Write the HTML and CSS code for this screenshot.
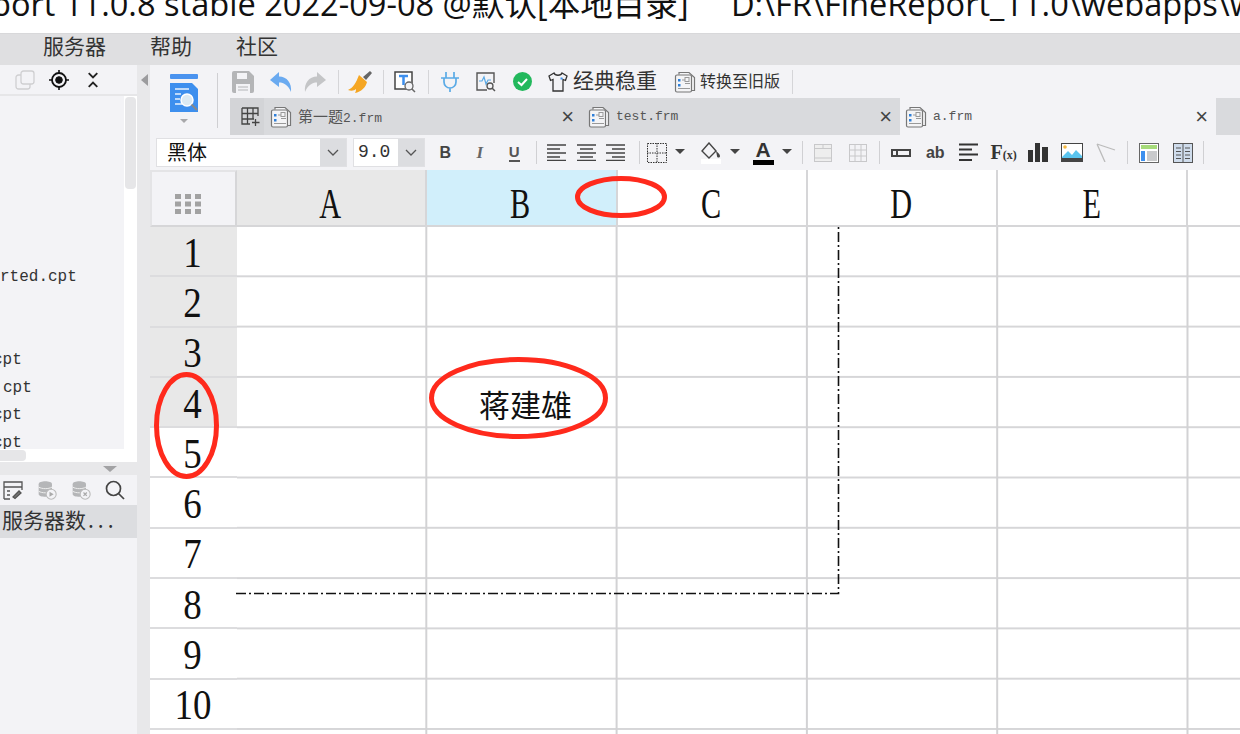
FILE: index.html
```html
<!DOCTYPE html>
<html lang="zh-CN">
<head>
    <meta charset="UTF-8">
    <title>FineReport 11.0.8</title>
    <link rel="stylesheet" href="styles.css">
</head>
<body>

<svg width="0" height="0" class="defs">
    <symbol id="frm" viewBox="0 0 22 22">
        <path d="M5 3.5V1.5H15L20.5 6.5V19.500H17" fill="#f4f4f6" stroke="#777" stroke-width="1.200"/>
        <rect x="1.500" y="4" width="16" height="17" rx="1.500" fill="#f4f4f6" stroke="#777" stroke-width="1.200"/>
        <rect x="4" y="8" width="2.500" height="2.500" fill="#2f7fd8"/>
        <rect x="4" y="13" width="2.500" height="2.500" fill="#2f7fd8"/>
        <path d="M8 9H11M11 12.500H16M4 17.500H16" stroke="#999" stroke-width="1.200"/>
        <rect x="11" y="6.500" width="4" height="4" fill="none" stroke="#999"/>
    </symbol>
    <symbol id="db" viewBox="0 0 24 24">
        <path d="M2 5C2 .5 18 .5 18 5V17C18 21 2 21 2 17Z" fill="#b5b6b8"/>
        <path d="M2 8.500C6 11 14 11 18 8.500M2 13.500C6 16 14 16 18 13.500" stroke="#eee" stroke-width="1.200" fill="none"/>
        <circle cx="17" cy="17" r="6" fill="#f3f3f6" stroke="#bbb" stroke-width="1.300"/>
    </symbol>
</svg>

<div class="title-bar"><span class="title-text">port 11.0.8 stable 2022-09-08 @默认[本地目录]&nbsp;&nbsp;&nbsp;&nbsp;&nbsp;D:\FR\FineReport_11.0\webapps\w</span></div>

<div class="menu-bar">
    <span class="menu-item">服务器</span>
    <span class="menu-item">帮助</span>
    <span class="menu-item">社区</span>
</div>

<div class="main">
    <div class="left-panel">
        <div class="panel-tools">
            <span class="panel-btn">
                <svg width="20" height="20" viewBox="0 0 20 20" fill="none" stroke="#cfcfd1" stroke-width="1.300"><rect x="6" y="1" width="13" height="13" rx="2.500"/><path d="M6 5H3.500A2.500 2.500 0 0 0 1 7.500V16.500A2.500 2.500 0 0 0 3.500 19H12.500A2.500 2.500 0 0 0 15 16.500V14"/></svg>
            </span>
            <span class="panel-btn">
                <svg width="20" height="20" viewBox="0 0 20 20" fill="none" stroke="#111"><circle cx="10" cy="10" r="7" stroke-width="1.800"/><circle cx="10" cy="10" r="3.300" fill="#111"/><path d="M10 0V3M10 17V20M0 10H3M17 10H20" stroke-width="1.600"/></svg>
            </span>
            <span class="panel-btn">
                <svg width="12" height="16" viewBox="0 0 14 18" fill="none" stroke="#222" stroke-width="2.200"><path d="M2 1L7 6L12 1M2 17L7 12L12 17"/></svg>
            </span>
        </div>
        <div class="file-area">
            <div class="file-list">
                <div class="file-row">rted.cpt</div>
                <div class="file-row"></div>
                <div class="file-row"></div>
                <div class="file-row shift-left">cpt</div>
                <div class="file-row shift-right">cpt</div>
                <div class="file-row shift-left">cpt</div>
                <div class="file-row shift-left">cpt</div>
            </div>
            <div class="scroll-track"><div class="scroll-thumb"></div></div>
        </div>
        <div class="hscroll"><div class="hscroll-thumb"></div></div>
        <div class="panel-divider"><span class="divider-arrow"></span></div>
        <div class="data-tools">
            <span class="panel-btn">
                <svg width="20" height="20" viewBox="0 0 20 20" fill="none" stroke="#555" stroke-width="1.300"><path d="M1 19V2H19V10M1 7H19M4 11H7M4 15H7M1 19H7"/><path d="M10 17L16 11L18 13L12 18.500Z" fill="#777"/></svg>
            </span>
            <span class="panel-btn"><svg width="20" height="20" viewBox="0 0 24 24"><use href="#db" width="24" height="24"/><path d="M15 14L20 17L15 20Z" fill="#aaa"/></svg></span>
            <span class="panel-btn"><svg width="20" height="20" viewBox="0 0 24 24"><use href="#db" width="24" height="24"/><path d="M15 15L19 19M19 15L15 19" stroke="#aaa" stroke-width="1.500"/></svg></span>
            <span class="panel-btn">
                <svg width="20" height="20" viewBox="0 0 20 20" fill="none" stroke="#444" stroke-width="1.700"><circle cx="8.500" cy="8.500" r="7"/><path d="M13.500 13.500L19 19"/></svg>
            </span>
        </div>
        <div class="data-row">服务器数<span class="dots">...</span></div>
    </div>

    <div class="splitter"><span class="splitter-arrow"></span></div>

    <div class="workspace">
        <div class="top-area">
            <div class="logo-col">
                <div class="logo-box">
                    <svg width="28" height="38" viewBox="0 0 28 38">
                        <rect width="28" height="5" rx="1" fill="#4a93ef"/>
                        <path d="M0 9H22L28 15V38H0Z" fill="#3d8fee"/>
                        <path d="M5 15H19M5 20H11M5 25H10M5 30H12" stroke="#e8f2fd" stroke-width="1.500"/>
                        <circle cx="17" cy="26" r="6" fill="#dceaf3" stroke="#fff" stroke-width="1.500"/>
                        <path d="M21.500 30.500L27 36" stroke="#888" stroke-width="2"/>
                    </svg>
                    <span class="logo-caret"></span>
                </div>
            </div>
            <div class="tool-col">
                <div class="toolbar">
                    <span class="tool-btn">
                        <svg width="22" height="22" viewBox="0 0 22 22"><path d="M0 2A2 2 0 0 1 2 0H17L22 5V20A2 2 0 0 1 20 22H2A2 2 0 0 1 0 20Z" fill="#b4b5b7"/><rect x="5" y="2" width="10" height="6" fill="#f3f3f6"/><rect x="4" y="13" width="14" height="9" fill="#f3f3f6"/><path d="M6 16H16M6 19H16" stroke="#b4b5b7"/></svg>
                    </span>
                    <span class="tool-btn undo">
                        <svg width="22" height="20" viewBox="0 0 22 20"><path d="M9 0L0 8L9 15V10.500C14 10.500 18 13 21 20C22 11 17 4.500 9 4.500Z" fill="#6aaaf0"/></svg>
                    </span>
                    <span class="tool-btn">
                        <svg width="22" height="20" viewBox="0 0 22 20"><path d="M13 0L22 8L13 15V10.500C8 10.500 4 13 1 20C0 11 5 4.500 13 4.500Z" fill="#c4c5c7"/></svg>
                    </span>
                    <span class="tool-sep"></span>
                    <span class="tool-btn">
                        <svg width="24" height="22" viewBox="0 0 24 22"><path d="M15 6L22 0L24 2L18 9Z" fill="#666"/><path d="M11 4L19 11C18 16 13 21 7 22C8 20 8 19 8 18C6 20 3 20 0 19C5 17 8 12 11 4Z" fill="#f5a623"/></svg>
                    </span>
                    <span class="tool-sep"></span>
                    <span class="tool-btn">
                        <svg width="22" height="22" viewBox="0 0 22 22"><rect x="1" y="1" width="17" height="17" fill="#fff" stroke="#444" stroke-width="1.500"/><path d="M5 5H14M9.500 5V14" stroke="#3d8fee" stroke-width="2.500"/><circle cx="15" cy="15" r="4" fill="#f3f3f6" stroke="#666" stroke-width="1.300"/><path d="M18 18L21 21" stroke="#666" stroke-width="1.500"/></svg>
                    </span>
                    <span class="tool-sep"></span>
                    <span class="tool-btn">
                        <svg width="18" height="20" viewBox="0 0 18 20" fill="none" stroke="#5aaae6" stroke-width="1.700"><path d="M5 0V6M13 0V6M0 6H18M3 6V10A6 6 0 0 0 15 10V6M9 16V20"/></svg>
                    </span>
                    <span class="tool-btn">
                        <svg width="20" height="20" viewBox="0 0 20 20" fill="none"><path d="M11 18H1V1H18V11" stroke="#555" stroke-width="1.400"/><path d="M3 9H6L8 5L10 12L12 8H15" stroke="#5aaae6" stroke-width="1.200"/><circle cx="14" cy="14" r="3" stroke="#555" stroke-width="1.300"/><path d="M16 16L19 19" stroke="#555" stroke-width="1.500"/></svg>
                    </span>
                    <span class="tool-btn">
                        <svg width="19" height="19" viewBox="0 0 19 19"><circle cx="9.500" cy="9.500" r="9.500" fill="#22b85c"/><path d="M5 10L8.500 13L14 7" fill="none" stroke="#fff" stroke-width="2"/></svg>
                    </span>
                    <span class="tool-btn">
                        <svg width="20" height="20" viewBox="0 0 20 20" fill="none" stroke="#333" stroke-width="1.300"><path d="M6 1L1 4L2.500 8.500L5 7.500V19H15V7.500L17.500 8.500L19 4L14 1C13 4 7 4 6 1Z"/><rect x="12.500" y="5.500" width="2" height="2" fill="#3d8fee" stroke="none"/></svg>
                    </span>
                    <span class="tool-label theme-label">经典稳重</span>
                    <svg class="switch-icon" width="22" height="22"><use href="#frm"/></svg>
                    <span class="tool-label switch-label">转换至旧版</span>
                    <span class="tool-sep last"></span>
                </div>
                <div class="tab-bar">
                    <span class="tab-add">
                        <svg width="20" height="20" viewBox="0 0 20 20" fill="none" stroke="#444" stroke-width="1.300"><path d="M1 1H17V9M1 1V17H9M1 6.500H17M1 12H13M6.500 1V17M12 1V12M14.500 12V19M11 15.500H18.500"/></svg>
                    </span>
                    <div class="tab">
                        <svg width="22" height="22"><use href="#frm"/></svg>
                        <span class="tab-name"><span class="tab-cjk">第一题</span>2.frm</span>
                        <span class="tab-close">×</span>
                    </div>
                    <div class="tab">
                        <svg width="22" height="22"><use href="#frm"/></svg>
                        <span class="tab-name">test.frm</span>
                        <span class="tab-close">×</span>
                    </div>
                    <div class="tab active">
                        <svg width="22" height="22"><use href="#frm"/></svg>
                        <span class="tab-name">a.frm</span>
                        <span class="tab-close">×</span>
                    </div>
                </div>
            </div>
        </div>

        <div class="format-bar">
            <div class="combo font-combo"><span class="combo-value">黑体</span><span class="combo-arrow"><svg width="12" height="7" viewBox="0 0 12 7" fill="none" stroke="#555" stroke-width="1.300"><path d="M1 1L6 6L11 1"/></svg></span></div>
            <div class="combo size-combo"><span class="combo-value mono">9.0</span><span class="combo-arrow"><svg width="12" height="7" viewBox="0 0 12 7" fill="none" stroke="#555" stroke-width="1.300"><path d="M1 1L6 6L11 1"/></svg></span></div>

            <span class="fmt-btn first"><b class="fmt-b">B</b></span>
            <span class="fmt-btn"><i class="fmt-i">I</i></span>
            <span class="fmt-btn"><span class="fmt-u">U</span></span>
            <span class="fmt-sep sep-bold"></span>

            <span class="fmt-btn slim"><svg width="20" height="17" viewBox="0 0 20 17" stroke="#444" stroke-width="1.500"><path d="M0 1H19M0 5H13M0 9H19M0 13H13M0 16.500H19"/></svg></span>
            <span class="fmt-btn slim"><svg width="20" height="17" viewBox="0 0 20 17" stroke="#444" stroke-width="1.500"><path d="M0 1H19M3 5H16M0 9H19M3 13H16M0 16.500H19"/></svg></span>
            <span class="fmt-btn slim"><svg width="20" height="17" viewBox="0 0 20 17" stroke="#444" stroke-width="1.500"><path d="M0 1H19M6 5H19M0 9H19M6 13H19M0 16.500H19"/></svg></span>
            <span class="fmt-sep sep-align"></span>

            <span class="fmt-btn border-btn"><svg width="20" height="20" viewBox="0 0 20 20" fill="none" stroke="#333" stroke-dasharray="1.500 1"><rect x=".5" y=".5" width="19" height="19"/><path d="M10 0V20M0 10H20"/></svg></span>
            <span class="fmt-caret"></span>
            <span class="fmt-btn fill-btn"><svg width="20" height="22" viewBox="0 0 20 22"><path d="M8 1L1 9L8 16L15 9Z" fill="none" stroke="#444" stroke-width="1.400"/><path d="M15 9C17 11 19 12 19 14C19 16 16 16 16 14Z" fill="#444"/><rect y="17" width="20" height="5" fill="#fff"/></svg></span>
            <span class="fmt-caret"></span>
            <span class="fmt-btn color-btn"><span class="color-a">A</span></span>
            <span class="fmt-caret"></span>
            <span class="fmt-sep sep-color"></span>

            <span class="fmt-btn"><svg width="18" height="18" viewBox="0 0 18 18" fill="#eee" stroke="#c8c8ca"><rect x=".5" y=".5" width="17" height="17"/><path d="M0 4.500H18M9 0V4.500M0 14H18"/></svg></span>
            <span class="fmt-btn"><svg width="18" height="18" viewBox="0 0 18 18" fill="none" stroke="#c8c8ca"><rect x=".5" y=".5" width="17" height="17"/><path d="M0 6H18M0 12H18M6 0V18M12 0V18"/></svg></span>
            <span class="fmt-sep sep-merge"></span>

            <span class="fmt-btn tight"><svg width="20" height="8" viewBox="0 0 20 8"><rect width="20" height="8" fill="#444"/><rect x="2" y="2" width="16" height="4" fill="#f3f3f6"/><rect x="5" y="1" width="2" height="6" fill="#444"/></svg></span>
            <span class="fmt-btn tight"><span class="fmt-ab">ab</span></span>
            <span class="fmt-btn tight"><svg width="20" height="19" viewBox="0 0 20 19" stroke="#333" stroke-width="2.200"><path d="M0 1.500H19M0 6.500H13M0 11.500H19M0 17H13"/></svg></span>
            <span class="fmt-btn tight"><span class="fmt-fx">F<small>(x)</small></span></span>
            <span class="fmt-btn tight"><svg width="20" height="19" viewBox="0 0 20 19" fill="#333"><rect y="7" width="5" height="12"/><rect x="7" width="5" height="19"/><rect x="14" y="4" width="6" height="15"/></svg></span>
            <span class="fmt-btn tight"><svg width="22" height="19" viewBox="0 0 22 19"><rect width="22" height="19" fill="#444"/><rect x="1" y="1" width="20" height="13" fill="#fff"/><circle cx="4" cy="4" r="1.800" fill="#f5b942"/><path d="M1 14L7 8L11 12L15 7L21 13V15H1Z" fill="#5ac4ee"/></svg></span>
            <span class="fmt-btn tight"><svg width="20" height="19" viewBox="0 0 20 19" fill="none" stroke="#bbb" stroke-width="1.300"><path d="M1 1L19 7M1 1L9 19"/></svg></span>
            <span class="fmt-sep sep-chart"></span>

            <span class="fmt-btn"><svg width="20" height="20" viewBox="0 0 20 20"><rect x=".5" y=".5" width="19" height="19" fill="#fff" stroke="#666"/><rect x="2" y="2" width="16" height="4" fill="#a6db7a"/><rect x="2" y="8" width="4" height="10" fill="#3d8fee"/><rect x="8" y="8" width="10" height="10" fill="#c9cacc"/></svg></span>
            <span class="fmt-btn"><svg width="20" height="20" viewBox="0 0 20 20" fill="#cfdcec" stroke="#555"><rect x=".5" y=".5" width="19" height="19"/><path d="M10 0V20M3 5H8M3 8.500H8M3 12H8M3 15.500H8M12 5H17M12 8.500H17M12 12H17M12 15.500H17"/></svg></span>
            <span class="fmt-sep sep-last"></span>
        </div>

        <div class="sheet">
            <div class="col-header">
                <div class="corner">
                    <svg width="26" height="20" viewBox="0 0 26 20" fill="#a2a2a2"><rect width="6" height="5"/><rect x="10" width="6" height="5"/><rect x="20" width="6" height="5"/><rect y="7.500" width="6" height="5"/><rect x="10" y="7.500" width="6" height="5"/><rect x="20" y="7.500" width="6" height="5"/><rect y="15" width="6" height="5"/><rect x="10" y="15" width="6" height="5"/><rect x="20" y="15" width="6" height="5"/></svg>
                </div>
                <div class="col-cell gray"><span class="glyph">A</span></div>
                <div class="col-cell blue"><span class="glyph">B</span></div>
                <div class="col-cell"><span class="glyph">C</span></div>
                <div class="col-cell"><span class="glyph">D</span></div>
                <div class="col-cell"><span class="glyph">E</span></div>
                <div class="col-cell col-rest"></div>
            </div>
            <div class="sheet-body">
                <div class="row-header">
                    <div class="row-cell gray"><span class="glyph num">1</span></div>
                    <div class="row-cell gray"><span class="glyph num">2</span></div>
                    <div class="row-cell gray"><span class="glyph num">3</span></div>
                    <div class="row-cell gray"><span class="glyph num">4</span></div>
                    <div class="row-cell"><span class="glyph num">5</span></div>
                    <div class="row-cell"><span class="glyph num">6</span></div>
                    <div class="row-cell"><span class="glyph num">7</span></div>
                    <div class="row-cell"><span class="glyph num">8</span></div>
                    <div class="row-cell"><span class="glyph num">9</span></div>
                    <div class="row-cell"><span class="glyph num">10</span></div>
                    <div class="row-cell row-rest"></div>
                </div>
                <div class="cells">
                    <div class="cell-name">蒋建雄</div>
                </div>
            </div>
        </div>
    </div>
</div>

<svg class="overlay" width="1240" height="734" viewBox="0 0 1240 734" fill="none">
    <path d="M236 593.500H838.500V226" stroke="#111" stroke-width="1.600" stroke-dasharray="10 3 2 3"/>
    <g stroke="#ff2a1c" stroke-width="5">
        <ellipse cx="621" cy="197" rx="43.500" ry="18.500"/>
        <ellipse cx="186.500" cy="425.500" rx="30" ry="51"/>
        <ellipse cx="518.500" cy="398" rx="87" ry="38.500"/>
    </g>
</svg>

</body>
</html>
```

FILE: styles.css
```css
* {
    box-sizing: border-box;
}
body {
    margin: 0;
    width: 1240px;
    height: 734px;
    overflow: hidden;
    position: relative;
    display: flex;
    flex-direction: column;
    background: #f3f3f6;
    color: #222;
    font-family: "Noto Sans CJK SC", "Noto Sans", sans-serif;
}
.defs {
    position: absolute;
}

/* title + menu */
.title-bar {
    height: 33px;
    background: #fff;
    overflow: hidden;
    white-space: nowrap;
}
.title-text {
    display: block;
    margin: -18px 0 0 -9px;
    font: 32.600px/44px "Open Sans", "Noto Sans CJK SC", sans-serif;
    color: #111;
}
.menu-bar {
    height: 32px;
    background: #dfdfe1;
    border-top: 1px solid #d8d8da;
    display: flex;
    align-items: center;
    padding-left: 43px;
    font-size: 21px;
    color: #333;
}
.menu-item {
    line-height: 28px;
    margin: 0 44px 10px 0;
}
.main {
    flex: 1;
    display: flex;
    min-height: 0;
    overflow: hidden;
}

/* left panel */
.left-panel {
    width: 137px;
    flex: none;
    display: flex;
    flex-direction: column;
    overflow: hidden;
}
.panel-tools {
    height: 31px;
    flex: none;
    display: flex;
    align-items: center;
    padding-left: 8px;
    border-bottom: 2px solid #e6e6e8;
}
.panel-btn {
    width: 34px;
    flex: none;
    display: flex;
    justify-content: center;
    align-items: center;
}
.file-area {
    height: 353px;
    flex: none;
    display: flex;
}
.file-list {
    width: 124px;
    padding-top: 167px;
    overflow: hidden;
    font: 16px/28px "Liberation Mono", monospace;
    color: #333;
}
.file-row {
    height: 27.700px;
    white-space: nowrap;
}
.shift-left {
    margin-left: -7px;
}
.shift-right {
    margin-left: 3px;
}
.scroll-track {
    width: 13px;
    background: #fff;
    padding: 1px 1px;
}
.scroll-thumb {
    height: 92px;
    width: 11px;
    background: #e6e6e8;
    border-radius: 4px;
}
.hscroll {
    height: 13px;
    flex: none;
    background: #fff;
    padding-top: 1px;
}
.hscroll-thumb {
    width: 26px;
    height: 11px;
    background: #e6e6e8;
    border-radius: 0 4px 4px 0;
}
.panel-divider {
    height: 13px;
    flex: none;
    background: #e8e8ea;
    display: flex;
    justify-content: flex-end;
    padding: 4px 20px 0 0;
}
.divider-arrow {
    width: 0;
    height: 0;
    border-left: 7px solid transparent;
    border-right: 7px solid transparent;
    border-top: 6px solid #a2a2a4;
}
.data-tools {
    height: 30px;
    flex: none;
    display: flex;
    align-items: center;
    margin-left: -4px;
}
.data-row {
    height: 33px;
    flex: none;
    padding-left: 2px;
    background: #dcdde0;
    font-size: 21px;
    line-height: 29px;
    white-space: nowrap;
    color: #333;
}
.dots {
    letter-spacing: 4px;
    margin-left: 2px;
}
.splitter {
    width: 13px;
    flex: none;
    background: #e8e8ea;
    padding: 9px 0 0 4px;
}
.splitter-arrow {
    display: block;
    width: 0;
    height: 0;
    border-top: 6px solid transparent;
    border-bottom: 6px solid transparent;
    border-right: 7px solid #9c9c9e;
}

/* toolbar */
.workspace {
    flex: 1;
    min-width: 0;
    display: flex;
    flex-direction: column;
}
.top-area {
    height: 70px;
    flex: none;
    display: flex;
}
.logo-col {
    width: 75px;
    padding: 8px 0 0 20px;
}
.logo-box {
    width: 48px;
    height: 55px;
    padding-top: 1px;
    border-right: 1px solid #cfcfd2;
}
.logo-box svg {
    display: block;
}
.logo-caret {
    display: block;
    width: 0;
    height: 0;
    margin: 7px 0 0 10px;
    border-left: 4px solid transparent;
    border-right: 4px solid transparent;
    border-top: 4px solid #a8a8aa;
}
.tool-col {
    flex: 1;
    min-width: 0;
}
.toolbar {
    height: 33px;
    display: flex;
    align-items: center;
}
.tool-btn {
    width: 36px;
    flex: none;
    display: flex;
    justify-content: center;
    align-items: center;
}
.tool-btn.undo {
    margin: 0 -2px 0 2px;
}
.tool-sep {
    width: 1px;
    height: 24px;
    background: #d5d5d8;
    margin: 0 3px 0 5px;
}
.tool-sep.last {
    margin-left: 12px;
}
.tool-label {
    white-space: nowrap;
    color: #333;
    line-height: 1;
}
.theme-label {
    font-size: 21px;
    margin: 0 0 5px -3px;
}
.switch-icon {
    margin-left: 17px;
}
.switch-label {
    font-size: 16px;
    margin: 0 0 3px 4px;
}

/* tabs */
.tab-bar {
    height: 37px;
    margin-left: 5px;
    background: #d9dadd;
    display: flex;
    overflow: hidden;
}
.tab-add {
    width: 34px;
    flex: none;
    display: flex;
    align-items: center;
    justify-content: center;
    padding-left: 7px;
    background: #d3d4d7;
}
.tab {
    width: 318px;
    flex: none;
    display: flex;
    align-items: center;
    padding: 1px 8px 0 6px;
    font: 13px/22px "Liberation Mono", monospace;
    color: #555;
}
.tab.active {
    width: 316px;
    background: #f3f3f6;
    padding-left: 5px;
}
.tab svg {
    flex: none;
}
.tab-name {
    flex: 1;
    margin-left: 6px;
    white-space: nowrap;
}
.tab-cjk {
    font: 15px/22px "Noto Sans CJK SC", sans-serif;
}
.tab-close {
    font: 22px/22px "Liberation Sans", sans-serif;
    color: #444;
}

/* format bar */
.format-bar {
    height: 35px;
    flex: none;
    display: flex;
    align-items: flex-start;
    padding: 3px 0 0 6px;
}
.format-bar > * {
    height: 29px;
}
.combo {
    display: flex;
    background: #fff;
    border: 1px solid #e0e0e3;
    overflow: hidden;
}
.font-combo {
    width: 191px;
}
.size-combo {
    width: 72px;
    margin-left: 6px;
}
.combo-value {
    flex: 1;
    padding-left: 10px;
    font-size: 20px;
    line-height: 26px;
    color: #111;
}
.combo-value.mono {
    padding-left: 4px;
    font: 18px/26px "Liberation Mono", monospace;
    color: #333;
}
.combo-arrow {
    width: 26px;
    background: #dcdde0;
    display: flex;
    align-items: center;
    justify-content: center;
}
.fmt-btn {
    width: 34.5px;
    flex: none;
    display: flex;
    align-items: center;
    justify-content: center;
}
.fmt-btn.first {
    margin-left: 3px;
}
.fmt-btn.slim {
    width: 29.5px;
}
.fmt-btn.tight {
    width: 34.200px;
}
.fmt-sep {
    width: 1px;
    background: #d0d0d3;
    margin: 3px 0 0;
    height: 23px;
}
.sep-bold {
    margin-left: 4px;
    margin-right: 6px;
}
.sep-align {
    margin-left: 8px;
    margin-right: 3px;
}
.sep-color {
    margin-left: 10px;
    margin-right: 3px;
}
.sep-merge {
    margin-left: 4px;
    margin-right: 4px;
}
.sep-chart {
    margin-left: 4px;
    margin-right: 3px;
}
.sep-last {
    margin-left: 3px;
}
.border-btn {
    width: 28px;
}
.fill-btn {
    width: 30px;
    margin-left: 11px;
}
.color-btn {
    width: 30px;
    margin-left: 8px;
}
.fmt-caret {
    width: 0;
    height: 0;
    margin: 11px 0 0 4px;
    border-left: 5px solid transparent;
    border-right: 5px solid transparent;
    border-top: 5px solid #444;
}
.fmt-b,
.fmt-ab {
    font: bold 16px "Liberation Sans", sans-serif;
    color: #444;
}
.fmt-i {
    font: italic bold 17px "Liberation Serif", serif;
    color: #666;
}
.fmt-u {
    font: bold 15px/16px "Liberation Sans", sans-serif;
    color: #555;
    border-bottom: 2px solid #555;
}
.color-a {
    display: block;
    width: 21px;
    font: bold 21px/20px "Liberation Sans", sans-serif;
    text-align: center;
    color: #333;
    border-bottom: 5px solid #000;
}
.fmt-fx {
    font: bold 20px "Liberation Serif", serif;
    color: #333;
}
.fmt-fx small {
    font-size: 12px;
}

/* sheet */
.sheet {
    flex: 1;
    min-height: 0;
    overflow: hidden;
    background: #fff;
}
.col-header {
    height: 57px;
    display: flex;
}
.corner {
    width: 87px;
    flex: none;
    display: flex;
    align-items: center;
    justify-content: center;
    padding: 11px 12px 0 0;
    background: #f3f3f6;
    border: 2px solid #e4e4e6;
    border-bottom-color: #d6d6d8;
    border-right-color: #d6d6d8;
}
.col-cell {
    width: 190.300px;
    flex: none;
    display: flex;
    align-items: center;
    justify-content: center;
    padding: 13px 2px 0 0;
    border-right: 2px solid #d6d6d8;
    border-bottom: 2px solid #d6d6d8;
}
.col-cell.col-rest {
    flex: 1;
    width: auto;
    min-width: 0;
    border-right: 0;
}
.col-cell.gray,
.row-cell.gray {
    background: #e8e8e8;
}
.col-cell.blue {
    background: #d1effb;
}
.glyph {
    display: inline-block;
    font: 42px/44px "Liberation Serif", serif;
    color: #111;
    transform: scaleX(.72);
}
.glyph.num {
    transform: scaleX(.88);
}
.sheet-body {
    display: flex;
    height: 507px;
    overflow: hidden;
}
.row-header {
    width: 87px;
    flex: none;
}
.row-cell {
    height: 50.300px;
    display: flex;
    align-items: center;
    justify-content: center;
    padding: 3px 2px 0 0;
    border-bottom: 2px solid #dcdcde;
}
.row-rest {
    height: 4px;
    padding: 0;
    border: 0;
}
.cells {
    flex: 1;
    min-width: 0;
    display: grid;
    grid-template-columns: repeat(5, 190.300px) 1fr;
    grid-auto-rows: 50.300px;
    background-image:
        linear-gradient(to left, #d2d2d4 2px, transparent 2px),
        linear-gradient(to top, #d6d6d8 2px, transparent 2px);
    background-size: 190.300px 50.300px;
}
.cell-name {
    grid-column: 2;
    grid-row: 4;
    display: flex;
    align-items: center;
    justify-content: center;
    padding: 0 0 0 6px;
    font-size: 31px;
    color: #111;
}

/* hand-drawn marks and page break line on top of everything */
.overlay {
    position: absolute;
    left: 0;
    top: 0;
    pointer-events: none;
}
```
